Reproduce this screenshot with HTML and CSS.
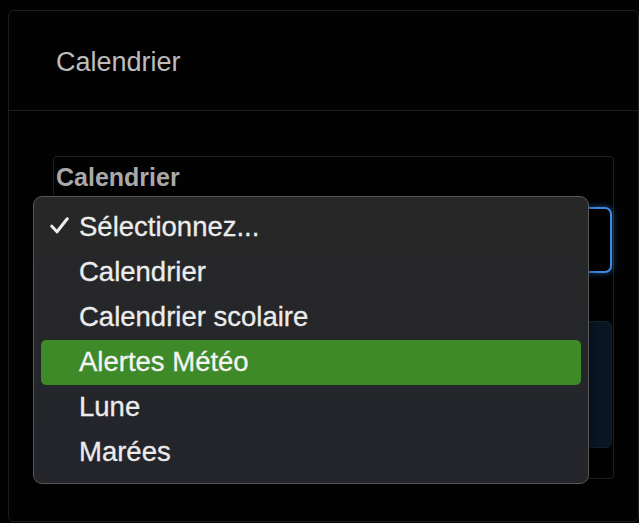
FILE: index.html
```html
<!DOCTYPE html>
<html lang="fr">
<head>
<meta charset="utf-8">
<title>Calendrier</title>
<link rel="stylesheet" href="styles.css">
</head>
<body>
<div class="card">
  <div class="card-header">Calendrier</div>
  <div class="card-body">
    <div class="field-box">
      <div class="field-label">Calendrier</div>
      <div class="select"></div>
      <div class="panel"></div>
    </div>
  </div>
  <div class="menu">
    <div class="item checked">
      <svg class="check" viewBox="0 0 19 17" width="19" height="17"><path d="M1.8 9.2 L7 14.8 L17.2 1.8" fill="none" stroke="#ececec" stroke-width="3" stroke-linecap="round" stroke-linejoin="round"/></svg>
      Sélectionnez...
    </div>
    <div class="item">Calendrier</div>
    <div class="item">Calendrier scolaire</div>
    <div class="item active">Alertes Météo</div>
    <div class="item">Lune</div>
    <div class="item">Marées</div>
  </div>
</div>
</body>
</html>
```
FILE: styles.css
```css
html, body {
  margin: 0;
  padding: 0;
  background: #020203;
  font-family: "Liberation Sans", Arial, sans-serif;
}
body {
  width: 639px;
  height: 523px;
  overflow: hidden;
}
.card {
  position: relative;
  box-sizing: border-box;
  margin: 10px 0 0 8px;
  width: 631px;
  height: 512px;
  border: 1px solid #1d1d21;
  border-radius: 6px;
  background: #020203;
}
.card-header {
  box-sizing: border-box;
  height: 100px;
  border-bottom: 1px solid #1d1d21;
  padding-left: 47px;
  display: flex;
  align-items: center;
  padding-top: 3px;
  font-size: 27px;
  color: #bdbdbd;
}
.card-body {
  padding: 45px 0 0 44px;
}
.field-box {
  box-sizing: border-box;
  width: 561px;
  height: 323px;
  border: 1px solid #1f1f23;
  border-radius: 4px;
  padding: 6px 1px 0 2px;
  display: flex;
  flex-direction: column;
}
.field-label {
  font-size: 25px;
  font-weight: bold;
  line-height: 29px;
  color: #a9a9a9;
}
.select {
  box-sizing: border-box;
  margin-top: 15px;
  height: 66px;
  border: 2px solid #3c8ce2;
  border-radius: 7px;
  background: #010102;
  box-shadow: 0 0 6px rgba(60, 140, 226, 0.55);
}
.panel {
  box-sizing: border-box;
  margin-top: 48px;
  height: 127px;
  border: 1px solid #0f2133;
  border-radius: 6px;
  background: #0a1623;
}
.menu {
  position: absolute;
  left: 24px;
  top: 185px;
  box-sizing: border-box;
  width: 556px;
  height: 288px;
  padding: 8px 7px;
  border: 1px solid #575757;
  border-radius: 9px;
  background: linear-gradient(180deg, #272727 0%, #25262a 60%, #23252b 100%);
  box-shadow: 0 4px 14px rgba(0, 0, 0, 0.5);
}
.item {
  position: relative;
  height: 45px;
  line-height: 43px;
  padding-left: 38px;
  border-radius: 5px;
  font-size: 27.5px;
  color: #ececec;
  -webkit-text-stroke: 0.3px #ececec;
  white-space: nowrap;
}
.item.active {
  background: #3f8a28;
  color: #f4f4f4;
  -webkit-text-stroke: 0.3px #f4f4f4;
}
.check {
  position: absolute;
  left: 9px;
  top: 12px;
}
```
